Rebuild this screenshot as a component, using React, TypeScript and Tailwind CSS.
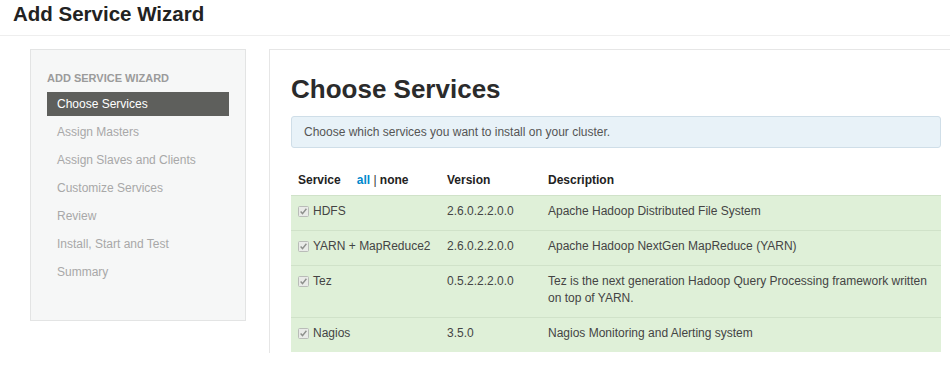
import React from "react";

type Service = {
  name: string;
  version: string;
  description: string;
};

const steps = [
  "Choose Services",
  "Assign Masters",
  "Assign Slaves and Clients",
  "Customize Services",
  "Review",
  "Install, Start and Test",
  "Summary",
];

const services: Service[] = [
  { name: "HDFS", version: "2.6.0.2.2.0.0", description: "Apache Hadoop Distributed File System" },
  { name: "YARN + MapReduce2", version: "2.6.0.2.2.0.0", description: "Apache Hadoop NextGen MapReduce (YARN)" },
  {
    name: "Tez",
    version: "0.5.2.2.2.0.0",
    description: "Tez is the next generation Hadoop Query Processing framework written on top of YARN.",
  },
  { name: "Nagios", version: "3.5.0", description: "Nagios Monitoring and Alerting system" },
];

// greyed out checked box, like a disabled checkbox in the old browser
function CheckBox() {
  return (
    <svg width="11" height="11" viewBox="0 0 11 11" className="shrink-0">
      <rect x="0.5" y="0.5" width="10" height="10" rx="1" fill="#e9ebe8" stroke="#b9bcb8" />
      <path d="M2.6 5.6 L4.5 7.6 L8.4 2.8" fill="none" stroke="#8d908c" strokeWidth="1.4" />
    </svg>
  );
}

export default function App() {
  return (
    <div className="w-[950px] h-[388px] bg-white overflow-hidden font-['Liberation_Sans',Arial,sans-serif] text-[#333]">
      <div className="h-[36px] border-b border-[#eeeeee] pl-[13px] pt-[2px]">
        <h1 className="text-[20.5px] leading-[24px] font-bold text-[#222]">Add Service Wizard</h1>
      </div>

      <div className="flex items-start pt-[13px]">
        {/* sidebar */}
        <div className="ml-[30px] w-[216px] h-[272px] bg-[#f6f7f7] border border-[#e3e4e4] px-[16px] pt-[20px]">
          <div className="text-[11px] leading-[16px] font-bold uppercase text-[#9b9b9b] mb-[6px]">
            Add Service Wizard
          </div>
          <ul>
            {steps.map((step, i) => (
              <li
                key={step}
                className={
                  i === 0
                    ? "h-[24px] mb-[4px] px-[10px] text-[12px] leading-[24px] bg-[#5e5f5c] text-white"
                    : "h-[24px] mb-[4px] px-[10px] text-[12px] leading-[24px] text-[#a8a8a8]"
                }
              >
                {step}
              </li>
            ))}
          </ul>
        </div>

        {/* main panel */}
        <div className="ml-[23px] flex-1 border-l border-t border-[#e6e6e6] pl-[21px] pr-[9px] pt-[24px] pb-[1px]">
          <h2 className="text-[26px] leading-[30px] font-bold text-[#2b2b2b]">Choose Services</h2>
          <div className="mt-[12px] h-[32px] rounded-[3px] border border-[#cfdee8] bg-[#e8f2f8] pl-[12px] text-[12px] leading-[30px] text-[#555]">
            Choose which services you want to install on your cluster.
          </div>

          <table className="mt-[17px] w-full border-collapse text-[12px] table-fixed">
            <colgroup>
              <col className="w-[149px]" />
              <col className="w-[101px]" />
              <col />
            </colgroup>
            <thead>
              <tr className="h-[30px] text-left">
                <th className="pl-[7px] font-bold text-[#222]">
                  Service
                  <span className="ml-[16px] text-[#0088cc]">all</span>
                  <span className="font-normal text-[#333]"> | </span>
                  none
                </th>
                <th className="pl-[7px] font-bold text-[#222]">Version</th>
                <th className="pl-[7px] font-bold text-[#222]">Description</th>
              </tr>
            </thead>
            <tbody>
              {services.map((s) => (
                <tr key={s.name} className="bg-[#dff0d8] border-t border-[#d0e2c9] align-top text-[#444]">
                  <td className="pl-[7px] pt-[7px] pb-[10px] leading-[17px]">
                    <div className="flex items-center gap-[4px]">
                      <CheckBox />
                      <span>{s.name}</span>
                    </div>
                  </td>
                  <td className="pl-[7px] pt-[7px] pb-[10px] leading-[17px]">{s.version}</td>
                  <td className="pl-[7px] pr-[8px] pt-[7px] pb-[10px] leading-[17px]">{s.description}</td>
                </tr>
              ))}
            </tbody>
          </table>
        </div>
      </div>
    </div>
  );
}
